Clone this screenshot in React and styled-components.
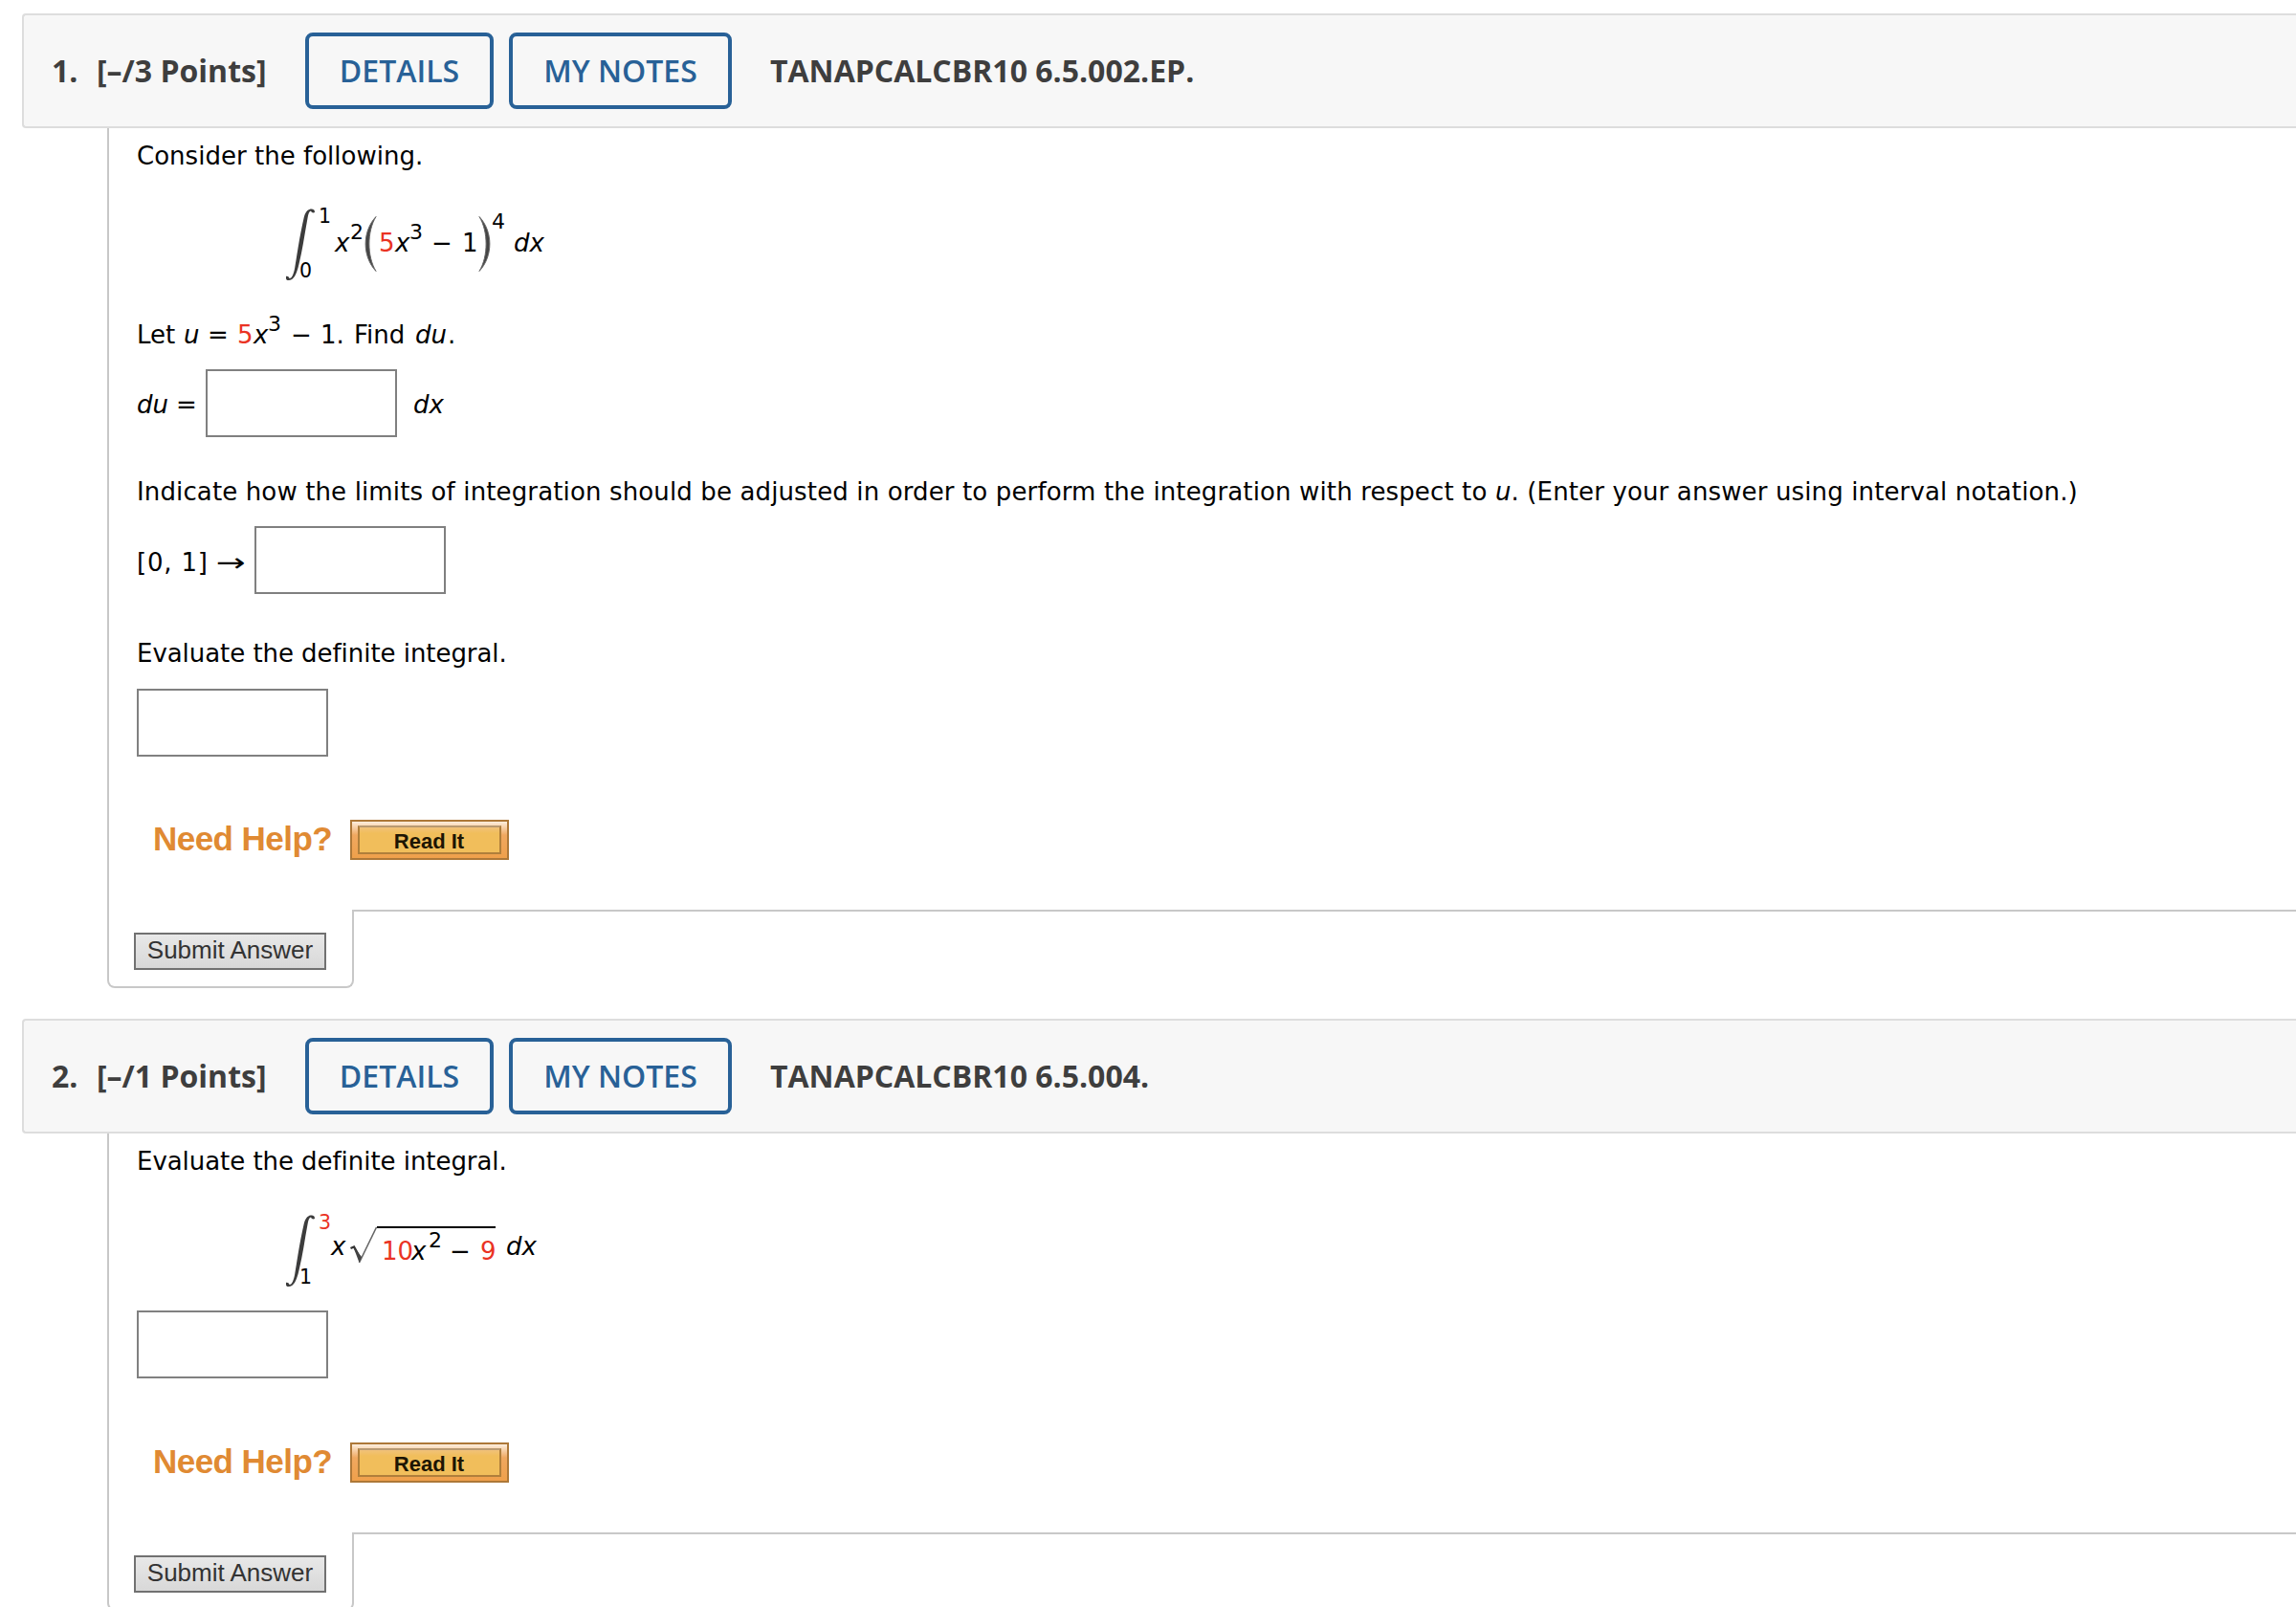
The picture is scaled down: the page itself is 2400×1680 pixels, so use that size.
import React from 'react';
import styled, { createGlobalStyle } from 'styled-components';

const GlobalStyle = createGlobalStyle`
  * {
    box-sizing: border-box;
  }

  body {
    margin: 0;
    background: #ffffff;
    overflow: hidden;
  }
`;

// Styled components
const Page = styled.main`
  height: 1680px;
  padding: 14px 0 0 23px;
  overflow: hidden;
  font-family: 'DejaVu Sans', Verdana, sans-serif;
  font-size: 26px;
  line-height: 32px;
  color: #000000;
`;

const Question = styled.section`
  margin-bottom: 32px;
`;

const Header = styled.header`
  display: flex;
  align-items: center;
  height: 120px;
  padding-left: 29px;
  border: 2px solid #dddddd;
  border-right: none;
  border-radius: 4px 0 0 4px;
  background: #f7f7f7;
  font-family: 'Open Sans', sans-serif;
  font-size: 32px;
  font-weight: 700;
  line-height: 44px;
  color: #3e3e3e;
  white-space: nowrap;
`;

const Number = styled.span`
  width: 47px;
`;

const Points = styled.span`
  width: 218px;
`;

const HeaderButton = styled.button`
  width: ${props => props.$width};
  height: 80px;
  margin-right: 16px;
  padding: 0;
  border: 4px solid #286197;
  border-radius: 8px;
  background: transparent;
  font-family: inherit;
  font-size: 32px;
  font-weight: 600;
  line-height: 44px;
  color: #286197;
`;

const Title = styled.span`
  margin-left: 24px;
`;

const Body = styled.div`
  margin-left: 89px;
  padding: 13px 0 52px 29px;
  border-left: 2px solid #c8c8c8;
`;

const Text = styled.p`
  margin: ${props => props.$top || '0'} 0 0;
  letter-spacing: ${props => props.$spacing || '0'};
  white-space: nowrap;
`;

const MathRow = styled.div`
  display: flex;
  align-items: flex-start;
  margin-top: ${props => props.$top};
  white-space: nowrap;
`;

const Formula = styled(MathRow)`
  height: 75px;
  margin-left: 156px;
`;

const Term = styled.span`
  width: ${props => props.$w};
  margin-top: ${props => props.$drop || '0'};
  margin-left: ${props => props.$left || '0'};
  flex: none;
  font-style: ${props => props.$italic ? 'italic' : 'normal'};
  letter-spacing: ${props => props.$spacing || '0'};
  color: ${props => props.$red ? '#ea3323' : 'inherit'};
`;

const Power = styled(Term)`
  font-size: 22px;
  line-height: 26px;
`;

const Arrow = styled(Term)`
  transform: scaleX(1.42);
  transform-origin: left center;
`;

const Limits = styled.span`
  display: flex;
  flex: none;
  flex-direction: column;
  justify-content: space-between;
  width: ${props => props.$w};
  height: 81px;
  margin-top: -4px;
  font-size: 20.5px;
  line-height: 24px;
`;

const UpperLimit = styled.span`
  padding-left: 19px;
  color: ${props => props.$red ? '#ea3323' : 'inherit'};
`;

const LowerLimit = styled.span`
  margin-left: -1px;
`;

const Drawing = styled.svg`
  flex: none;
  margin-top: ${props => props.$drop || '0'};
  margin-right: ${props => props.$gap || '0'};
  overflow: visible;
`;

const Radicand = styled.span`
  display: flex;
  flex: none;
  width: 124px;
  height: 40px;
  margin: 12px 11px 0 0;
  padding-left: 5px;
  border-top: 2px solid #000000;
`;

const Answer = styled.input`
  flex: none;
  display: block;
  width: 200px;
  height: 71px;
  margin: ${props => props.$top || '0'} 0 0;
  padding: 0;
  border: 2px solid #808080;
  border-radius: 0;
  background: #ffffff;
`;

const HelpRow = styled.div`
  display: flex;
  align-items: flex-start;
  height: 42px;
  margin-top: ${props => props.$top};
  padding-left: 17px;
  font-family: 'Liberation Sans', Arial, sans-serif;
`;

const HelpLabel = styled.span`
  width: 206px;
  font-size: 35px;
  font-weight: 700;
  line-height: 40px;
  letter-spacing: -0.55px;
  color: #e08a33;
  white-space: nowrap;
`;

const ReadButton = styled.button`
  width: 166px;
  height: 42px;
  padding: 4px 6px;
  border: 2px solid #ad7838;
  background: linear-gradient(#fdeedd 0, #f0a860 14px, #efa04b 100%);
  font-family: inherit;
`;

const ReadLabel = styled.span`
  display: block;
  height: 30px;
  padding-right: 1px;
  border: 2px solid #b07f3b;
  border-top-color: #b99a72;
  background: linear-gradient(#f1c27a 0, #f1be5b 6px);
  font-size: 22px;
  font-weight: 700;
  line-height: 29px;
  color: #1d1503;
`;

const Footer = styled.footer`
  display: flex;
  height: 82px;
  margin-left: 89px;
`;

const SubmitTab = styled.div`
  width: 258px;
  padding: 24px 0 0 26px;
  border: 2px solid #c8c8c8;
  border-top: none;
  border-radius: 0 0 8px 8px;
`;

const FooterRule = styled.div`
  flex: 1;
  border-top: 2px solid #c8c8c8;
`;

const SubmitButton = styled.button`
  display: block;
  width: 201px;
  height: 39px;
  padding: 0 0 2px;
  border: 2px solid #717171;
  border-radius: 0;
  background: linear-gradient(#e8e8e8, #d8d8d8);
  font-family: 'Liberation Sans', Arial, sans-serif;
  font-size: 26px;
  line-height: 33px;
  color: #333333;
  white-space: nowrap;
`;

const IntegralSign = () => (
  <Drawing width="15" height="75" viewBox="0 0 15 75">
    <path
      d="M0 71 C1 70.5 3 71 3.5 73 C6.5 73 8 68 9.2 62 C11 52 13.5 32 18.8 9 C20.5 2 24 0.3 27 0.5 C29.3 0.8 30 2 30 4 C28.5 5 26.5 4.2 26 2.5 C24 3 23.3 6 22.7 9 C19.5 26 17.5 42 13.5 58 C11 69 8 75 2.5 75 C1 75 0 74.5 0 73 Z"
      fill="#3c3c3c"
    />
  </Drawing>
);

const Paren = ({ flip, gap }) => (
  <Drawing width="13" height="58" viewBox="0 0 13 58" $drop="8px" $gap={gap}>
    <path
      d="M12 0.5 C-2.5 16 -2.5 42 12 57.5 C2.5 42 2.5 16 12 0.5 Z"
      fill="#444444"
      stroke="#666666"
      strokeWidth="1"
      transform={flip ? 'translate(13 0) scale(-1 1)' : undefined}
    />
  </Drawing>
);

const RootSign = () => (
  <Drawing width="28" height="39" viewBox="0 0 28 39" $drop="12px">
    <path d="M0.5 23 L4 21.5 L10.5 33" fill="none" stroke="#333333" strokeWidth="2.4" />
    <path d="M9.5 38 L27.5 1" fill="none" stroke="#666666" strokeWidth="1.6" />
    <path d="M3.5 22 L9.5 38 L12 32 Z" fill="#444444" />
  </Drawing>
);

/**
 * Question frame: header bar, question body and the submit tab below it.
 */
const QuestionCard = ({ number, points, title, children }) => (
  <Question>
    <Header>
      <Number>{number}.</Number>
      <Points>[–/{points} Points]</Points>
      <HeaderButton $width="197px">DETAILS</HeaderButton>
      <HeaderButton $width="233px">MY NOTES</HeaderButton>
      <Title>{title}</Title>
    </Header>
    <Body>{children}</Body>
    <Footer>
      <SubmitTab>
        <SubmitButton>Submit Answer</SubmitButton>
      </SubmitTab>
      <FooterRule />
    </Footer>
  </Question>
);

const NeedHelp = ({ top }) => (
  <HelpRow $top={top}>
    <HelpLabel>Need Help?</HelpLabel>
    <ReadButton>
      <ReadLabel>Read It</ReadLabel>
    </ReadButton>
  </HelpRow>
);

const App = () => (
  <>
    <GlobalStyle />
    <Page>
      <QuestionCard number={1} points={3} title="TANAPCALCBR10 6.5.002.EP.">
        <Text $spacing="0.02px">Consider the following.</Text>

        <Formula $top="39px">
          <IntegralSign />
          <Limits $w="36px">
            <UpperLimit>1</UpperLimit>
            <LowerLimit>0</LowerLimit>
          </Limits>
          <Term $w="16px" $drop="20px" $italic>x</Term>
          <Power $w="15px" $drop="12px">2</Power>
          <Paren gap="2px" />
          <Term $w="17px" $drop="20px" $red>5</Term>
          <Term $w="15px" $drop="20px" $italic>x</Term>
          <Power $w="23px" $drop="12px">3</Power>
          <Term $w="32px" $drop="20px">−</Term>
          <Term $w="17px" $drop="20px">1</Term>
          <Paren flip gap="1px" />
          <Power $w="23px" $drop="1px">4</Power>
          <Term $w="40px" $drop="20px" $italic>dx</Term>
        </Formula>

        <MathRow $top="41px">
          <Term $w="49px">Let</Term>
          <Term $w="25px" $italic>u</Term>
          <Term $w="31px">=</Term>
          <Term $w="17px" $red>5</Term>
          <Term $w="15px" $italic>x</Term>
          <Power $w="24px" $drop="-8px">3</Power>
          <Term $w="31px">−</Term>
          <Term $w="35px">1.</Term>
          <Term $w="64px">Find</Term>
          <Term $w="34px" $italic>du</Term>
          <Term>.</Term>
        </MathRow>

        <MathRow $top="20px">
          <Term $w="41px" $drop="21px" $italic>du</Term>
          <Term $w="31px" $drop="21px">=</Term>
          <Answer />
          <Term $left="17px" $drop="21px" $italic>dx</Term>
        </MathRow>

        <Text $top="41px" $spacing="0.132px">
          Indicate how the limits of integration should be adjusted in order to perform the integration with respect to <i>u</i>. (Enter your answer using interval notation.)
        </Text>

        <MathRow $top="20px">
          <Term $w="83px" $drop="22px" $spacing="0.8px">[0, 1]</Term>
          <Arrow $w="40px" $drop="22px">→</Arrow>
          <Answer />
        </MathRow>

        <Text $top="46px" $spacing="-0.05px">Evaluate the definite integral.</Text>
        <Answer $top="21px" />
        <NeedHelp top="66px" />
      </QuestionCard>

      <QuestionCard number={2} points={1} title="TANAPCALCBR10 6.5.004.">
        <Text $spacing="-0.05px">Evaluate the definite integral.</Text>

        <Formula $top="40px">
          <IntegralSign />
          <Limits $w="32px">
            <UpperLimit $red>3</UpperLimit>
            <LowerLimit>1</LowerLimit>
          </Limits>
          <Term $w="20px" $drop="17px" $italic>x</Term>
          <RootSign />
          <Radicand>
            <Term $w="31px" $drop="8px" $red>10</Term>
            <Term $w="18px" $drop="8px" $italic>x</Term>
            <Power $w="22px" $drop="0px">2</Power>
            <Term $w="32px" $drop="8px">−</Term>
            <Term $w="16px" $drop="8px" $red>9</Term>
          </Radicand>
          <Term $w="40px" $drop="17px" $italic>dx</Term>
        </Formula>

        <Answer $top="25px" />
        <NeedHelp top="67px" />
      </QuestionCard>
    </Page>
  </>
);

export default App;
